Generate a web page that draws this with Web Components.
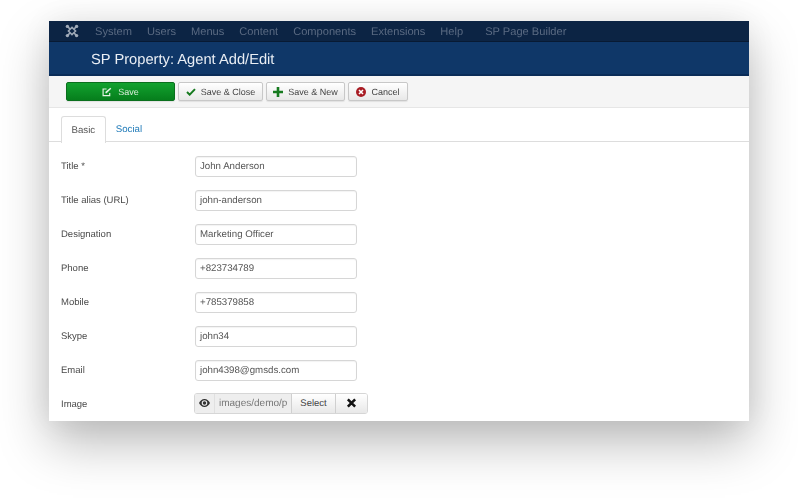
<!DOCTYPE html>
<html><head><meta charset="utf-8"><style>
html,body{margin:0;background:#fff;height:498px;overflow:hidden;font-family:"Liberation Sans",Arial,sans-serif;text-rendering:geometricPrecision}
</style></head><body>
<template id="t-win"><style>
:host{display:block;width:700px;height:400px;margin:21px 0 0 49px;background:#fff;overflow:hidden;box-shadow:0 22px 48px rgba(0,0,0,.27),0 0 30px rgba(0,0,0,.06)}
</style><slot></slot></template>
<template id="t-nav"><style>
:host{display:flex;align-items:center;height:21px;background:#0c2444;border-bottom:1px solid #081a33;box-sizing:border-box;color:#5a6a82;font-size:11.100px;filter:blur(.3px)}
svg{margin-left:16px;margin-right:16px;flex:none}
nav{display:flex;gap:15px;padding-top:1px}
</style>
<svg width="14" height="14" viewBox="0 0 14 14" fill="none" stroke="#a0aab8"><path d="M7 3.400 10.600 7 7 10.600 3.400 7Z" stroke-width="1.500"/><path d="M2.600 2.600 5 5M11.400 2.600 9 5M2.600 11.400 5 9M11.400 11.400 9 9" stroke-width="1.600"/><g fill="#a0aab8" stroke="none"><circle cx="2.400" cy="2.400" r="1.700"/><circle cx="11.600" cy="2.400" r="1.700"/><circle cx="2.400" cy="11.600" r="1.700"/><circle cx="11.600" cy="11.600" r="1.700"/></g></svg>
<nav><slot></slot></nav></template>
<template id="t-head"><style>
:host{display:block;height:34px;box-sizing:border-box;background:#0f3768;border-bottom:2px solid #0a2c58;box-shadow:0 1px 0 #e4e6e9;color:#e9eef4;font-size:14.700px;line-height:33px;padding:2px 0 0 42px;position:relative;filter:blur(.2px)}
</style><slot></slot></template>
<template id="t-bar"><style>
:host{display:flex;align-items:center;gap:3px;height:32px;box-sizing:border-box;background:#f5f5f5;border-bottom:1px solid #e6e6e6;padding:0 0 0 17px;filter:blur(.3px)}
</style><slot></slot></template>
<template id="t-btn"><style>
:host{display:inline-flex;align-items:center;justify-content:center;gap:5px;height:17px;box-sizing:content-box;border:1px solid #c8c8c8;border-radius:2px;background:linear-gradient(#fff,#e8e8e8);box-shadow:0 1px 1px rgba(0,0,0,.08);font-size:9px;color:#444;white-space:nowrap}
:host([primary]){background:linear-gradient(#12a22f,#067e1c);border-color:#0a6f1d;color:#d8ecd8;gap:6px}
svg{display:block;flex:none}
</style><slot name="icon"></slot><span><slot></slot></span></template>
<template id="t-tabs"><style>
:host{display:flex;height:34px;box-sizing:border-box;border-bottom:1px solid #ddd;padding:8px 0 0 12px;font-size:9.700px;filter:blur(.3px)}
::slotted(a){display:block;height:26px;line-height:28px;padding:0 10px;color:#1f7ab8;box-sizing:border-box}
::slotted(a[active]){color:#555;background:#fff;border:1px solid #ddd;border-bottom:0;border-radius:3px 3px 0 0;height:27px;line-height:27px;padding:0 9.500px}
</style><slot></slot></template>
<template id="t-form"><style>
:host{display:flex;flex-direction:column;gap:13px;padding:14px 0 0 12px;filter:blur(.3px)}
</style><slot></slot></template>
<template id="t-row"><style>
:host{display:flex;align-items:center;height:21px;font-size:9.500px;color:#4a4a4a}
label{width:134px;flex:none}
.in{box-sizing:border-box;width:162px;height:21px;border:1px solid #d6d6d6;border-radius:3px;padding:0 4px;line-height:19px;font-size:9.700px;color:#555;background:#fff;box-shadow:inset 0 1px 1px rgba(0,0,0,.05);white-space:nowrap;overflow:hidden}
</style><label><slot name="label"></slot></label><div class="in"><slot></slot></div></template>
<template id="t-media"><style>
:host{display:flex;height:21px;margin-top:-1px;align-items:center;font-size:9.500px;color:#4a4a4a}
label{width:133px;flex:none;padding-top:2px}
.g{display:flex;height:21px;box-sizing:border-box;border:1px solid #d6d6d6;border-radius:3px;overflow:hidden;color:#555}
.g>div{display:flex;align-items:center;justify-content:center;box-sizing:border-box}
.eye{width:20px;background:#eee;border-right:1px solid #e0e0e0;padding-bottom:2px}
.path{width:76px;background:#eee;color:#777;font-size:10px;justify-content:flex-start!important;padding:0 4px;overflow:hidden;white-space:nowrap}
.path span{display:block;overflow:hidden;width:68px}
.sel{width:45px;background:linear-gradient(#fff,#e8e8e8);border-left:1px solid #d0d0d0;border-right:1px solid #d0d0d0;color:#444}
.x{width:31px;background:linear-gradient(#fff,#e8e8e8);padding-bottom:1px}
</style><label><slot name="label"></slot></label>
<div class="g"><div class="eye"><svg width="11" height="8" viewBox="0 0 11 8"><path fill="#333" d="M5.500 0C3 0 1 1.800 0 4c1 2.200 3 4 5.500 4S10 6.200 11 4C10 1.800 8 0 5.500 0Zm0 6.800A2.800 2.800 0 1 1 5.500 1.200a2.800 2.800 0 0 1 0 5.600Z"/><circle cx="5.500" cy="4" r="1.700" fill="#333"/></svg></div><div class="path"><span><slot name="path"></slot></span></div><div class="sel"><slot name="btn"></slot></div><div class="x"><svg width="11" height="10" viewBox="0 0 11 11"><path d="M1.500 1.500 9.500 9.500M9.500 1.500 1.500 9.500" stroke="#111" stroke-width="2.800"/></svg></div></div></template>
<script>
for(const [n,t] of [['app-window','t-win'],['app-nav','t-nav'],['app-header','t-head'],['app-toolbar','t-bar'],['app-button','t-btn'],['app-tabs','t-tabs'],['app-form','t-form'],['form-row','t-row'],['media-row','t-media']]){
customElements.define(n,class extends HTMLElement{constructor(){super();this.attachShadow({mode:'open'}).append(document.getElementById(t).content.cloneNode(true))}})}
</script>
<app-window>
<app-nav><span>System</span><span>Users</span><span>Menus</span><span>Content</span><span>Components</span><span>Extensions</span><span>Help</span><span style="margin-left:7px">SP Page Builder</span></app-nav>
<app-header>SP Property: Agent Add/Edit</app-header>
<app-toolbar>
<app-button primary style="width:107px"><svg slot="icon" width="10" height="10" viewBox="0 0 11 11" fill="none" stroke="#e4f2e4" stroke-width="1.300"><path d="M8.500 6.500V9.500H1.200V2.200H5"/><path d="M3.800 5.200 9.200 .8 10.200 1.900 5 7H3.800Z" fill="#e4f2e4" stroke="none"/></svg>Save</app-button>
<app-button style="width:83px"><svg slot="icon" width="10" height="8" viewBox="0 0 11 9" fill="none" stroke="#167a1f" stroke-width="2.200"><path d="M1 4.500 4 7.500 10 1.200"/></svg>Save &amp; Close</app-button>
<app-button style="width:77px"><svg slot="icon" width="10" height="10" viewBox="0 0 10 10" fill="none" stroke="#167a1f" stroke-width="2.600"><path d="M5 0V10M0 5H10"/></svg>Save &amp; New</app-button>
<app-button style="width:58px"><svg slot="icon" width="10" height="10" viewBox="0 0 10 10"><circle cx="5" cy="5" r="5" fill="#a81c24"/><path d="M3 3 7 7M7 3 3 7" stroke="#fff" stroke-width="1.600"/></svg>Cancel</app-button>
</app-toolbar>
<app-tabs><a active>Basic</a><a>Social</a></app-tabs>
<app-form>
<form-row><span slot="label">Title *</span>John Anderson</form-row>
<form-row><span slot="label">Title alias (URL)</span>john-anderson</form-row>
<form-row><span slot="label">Designation</span>Marketing Officer</form-row>
<form-row><span slot="label">Phone</span>+823734789</form-row>
<form-row><span slot="label">Mobile</span>+785379858</form-row>
<form-row><span slot="label">Skype</span>john34</form-row>
<form-row><span slot="label">Email</span>john4398@gmsds.com</form-row>
<media-row><span slot="label">Image</span><span slot="path">images/demo/p</span><span slot="btn">Select</span></media-row>
</app-form>
</app-window>
</body></html>
